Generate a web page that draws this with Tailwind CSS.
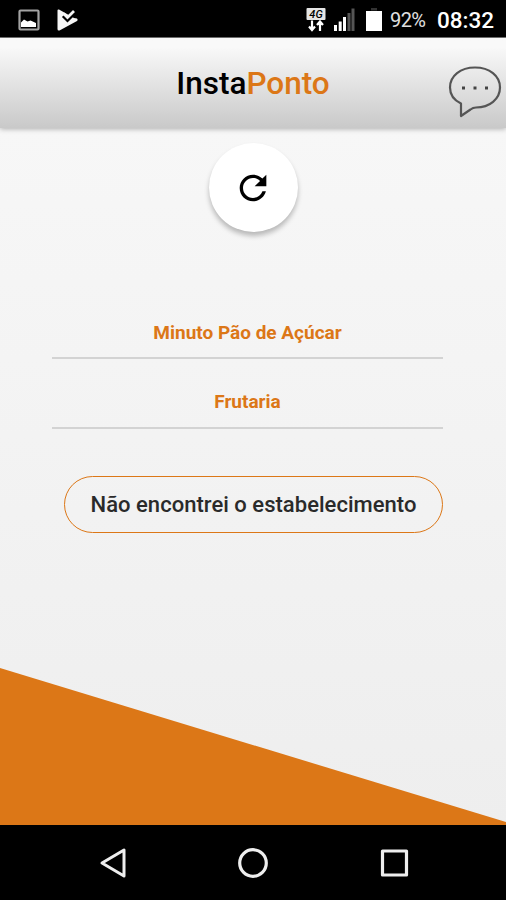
<!DOCTYPE html>
<html lang="pt-BR">
<head>
  <meta charset="UTF-8" />
  <meta name="viewport" content="width=device-width, initial-scale=1.0"/>
  <title>InstaPonto</title>
  <script src="https://cdn.jsdelivr.net/npm/@tailwindcss/browser@4"></script>
</head>
<body class="bg-black font-['Roboto',sans-serif]">
  <div class="w-full max-w-[506px] h-[900px] flex flex-col overflow-hidden">

    <!-- Status bar -->
    <div class="h-[38px] shrink-0 bg-black border-b border-[#777] flex items-center justify-between pl-[18px] pr-3 text-white">
      <div class="flex items-center gap-[17px] pt-[2px]">
        <svg class="w-[22px] h-[22px]" viewBox="0 0 22 22">
          <rect x="1.5" y="1.5" width="19" height="19" rx="1" fill="none" stroke="#a3a3a3" stroke-width="2.2"/>
          <path d="M3 18v-4.500l3-3 3.500 2 3-1 5.500 2.500V18z" fill="#fff"/>
        </svg>
        <svg class="w-[22px] h-[22px]" viewBox="0 0 22 22">
          <path d="M0.500 1.500Q0.500 0 2 .5L17 9 20 9.500Q21.500 11 20 12L2.500 21.500Q.5 22 .5 20z" fill="#f5f5f5"/>
          <path d="M6 7l4.500 4.500L18 4" fill="none" stroke="#000" stroke-width="3"/>
          <path d="M6.500 4.500l4 4L17 2" fill="none" stroke="#f5f5f5" stroke-width="2.800"/>
        </svg>
      </div>
      <div class="flex items-center pt-[2px]">
        <svg class="w-5 h-6 mr-[8px]" viewBox="0 0 20 24">
          <rect x="0.500" y="0" width="19" height="12" rx="1" fill="#e5e5e5"/>
          <text x="10" y="10" text-anchor="middle" font-family="Roboto" font-size="11" font-weight="500" font-style="italic" fill="#000">4G</text>
          <path d="M6 12.500v9M3 18.500l3 3.500 3-3.500M14 23v-9M11 17l3-3.500 3 3.500" fill="none" stroke="#fff" stroke-width="2.200"/>
        </svg>
        <svg class="w-[21px] h-6 mr-[11px]" viewBox="0 0 21 24">
          <path d="M0 17h3v6H0zM4.700 13.500h3V23h-3zM9 9h3v14H9z" fill="#fff"/>
          <path d="M13.500 5h3v18h-3zM17.500 0.500h3V23h-3z" fill="#555"/>
        </svg>
        <svg class="w-4 h-6 mr-[8px]" viewBox="0 0 16 24">
          <rect x="5" y="0" width="6" height="2.500" fill="#333"/>
          <rect x="0" y="3" width="16" height="20" fill="#fff"/>
        </svg>
        <span class="w-[35px] mr-[12px] text-[20px] leading-6 tracking-[-0.600px] text-[#e0e0e0]">92%</span>
        <span class="w-[57px] text-[22.500px] leading-6 font-medium whitespace-nowrap">08:32</span>
      </div>
    </div>

    <!-- Header -->
    <header class="relative z-10 h-[90px] shrink-0 grid grid-cols-[1fr_auto_1fr] items-center bg-linear-to-b from-[#f9f9f9] from-10% to-[#c9c9c9] shadow-[0_1px_5px_rgba(0,0,0,0.3)]">
      <span></span>
      <h1 class="pt-px text-[31.500px] leading-9 font-medium text-black"><span>Insta</span><span class="text-[#dc7717]">Ponto</span></h1>
      <button class="justify-self-end mr-[4px] mt-4">
        <svg class="w-[54px] h-[54px]" viewBox="0 0 54 54" fill="none" stroke="#555" stroke-width="2.200">
          <path d="M13 39.500C5.500 36 2 30.500 2 23.500 2 12 12.500 3.500 27 3.500S52 12 52 23.500 41.500 43.500 28 43.500Q25 43.500 22.500 45.500L13 52z" stroke-linejoin="round"/>
          <path d="M14 24h3M25.500 24h3M37 24h3" stroke="#444" stroke-width="3"/>
        </svg>
      </button>
    </header>

    <!-- Content -->
    <main class="relative h-[697px] shrink-0 flex flex-col bg-linear-to-b from-[#f7f7f7] to-[#eeeeee]">
      <button class="mt-[15px] self-center size-[89px] rounded-full bg-white shadow-[0_4px_5px_rgba(0,0,0,0.25)] flex items-center justify-center">
        <svg class="size-[40px]" viewBox="0 0 24 24" fill="#000">
          <path d="M17.650 6.350C16.200 4.900 14.210 4 12 4c-4.420 0-7.990 3.580-7.990 8s3.570 8 7.990 8c3.730 0 6.840-2.550 7.730-6h-2.080c-.82 2.330-3.040 4-5.650 4-3.310 0-6-2.690-6-6s2.690-6 6-6c1.660 0 3.140.69 4.220 1.780L13 11h7V4l-2.350 2.350z"/>
        </svg>
      </button>

      <ul class="mt-[69px] ml-[52px] mr-[63px] text-center text-[19px] leading-6 font-bold text-[#dc7717]">
        <li class="h-[58px] pt-[20px] border-b-2 border-[#d3d3d3]">Minuto Pão de Açúcar</li>
        <li class="h-[70px] pt-[31px] border-b-2 border-[#d3d3d3]">Frutaria</li>
      </ul>

      <button class="mt-[47px] ml-[64px] mr-[63px] h-[57px] shrink-0 rounded-full border-[1.500px] border-[#dc7717] text-[22px] tracking-[0.030px] font-medium text-[#2a2a2a] whitespace-nowrap">Não encontrei o estabelecimento</button>

      <svg class="mt-auto w-full h-[157px] shrink-0" viewBox="0 0 506 157" preserveAspectRatio="none">
        <polygon points="0,0 506,154 506,157 0,157" fill="#dc7717"/>
      </svg>
    </main>

    <!-- Navigation bar -->
    <nav class="grow flex items-center justify-between pl-[98px] pr-[96px] bg-black text-[#eee]">
      <svg class="size-8" viewBox="0 0 32 32" fill="none" stroke="currentColor" stroke-width="3" stroke-linejoin="round">
        <path d="M4 16L26 3v26z"/>
      </svg>
      <svg class="size-8" viewBox="0 0 32 32" fill="none" stroke="currentColor" stroke-width="3.200">
        <circle cx="15" cy="16" r="13.300"/>
      </svg>
      <svg class="size-8" viewBox="0 0 32 32" fill="none" stroke="currentColor" stroke-width="3.200" stroke-linejoin="round">
        <rect x="4.500" y="4" width="24" height="24"/>
      </svg>
    </nav>
  </div>
</body>
</html>
